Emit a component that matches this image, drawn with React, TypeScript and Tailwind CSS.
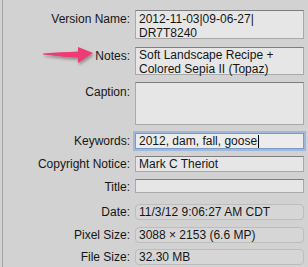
const field = 'border border-[#a9a9a9] border-t-[#7e7e7e] bg-[#e6e6e6] px-[3px] leading-[14px]';
const readonly = 'rounded-[4px] border border-[#bdbdbd] bg-[#d6d6d6] px-[3px] leading-[14px]';

function Row({ label, children, labelPad = 'pt-[2px]' }: { label: string; children: React.ReactNode; labelPad?: string }) {
  return (
    <>
      <div className={`text-right leading-[14px] ${labelPad}`}>{label}</div>
      {children}
    </>
  );
}

export default function App() {
  return (
    <div
      className="relative h-[267px] w-[308px] overflow-hidden bg-[#d2d2d2] text-[12px] text-[#161616]"
      style={{ fontFamily: '"Liberation Sans", Arial, sans-serif' }}
    >
      <div className="absolute left-[2px] top-0 h-full w-px bg-[#a4a4a4]" />
      <div className="grid grid-cols-[130px_169px] gap-x-[5px] pt-[10px]">
        <Row label="Version Name:" labelPad="pt-[2px]">
          <div className={`${field} h-[29px] pt-[1px]`}>
            2012-11-03|09-06-27|
            <br />
            DR7T8240
          </div>
        </Row>
        <div className="col-span-2 h-[8px]" />
        <Row label="Notes:" labelPad="pt-[2px]">
          <div className={`${field} h-[28px] pt-[0px]`}>
            Soft Landscape Recipe +
            <br />
            Colored Sepia II (Topaz)
          </div>
        </Row>
        <div className="col-span-2 h-[7px]" />
        <Row label="Caption:" labelPad="pt-[3px]">
          <div className={`${field} h-[43px]`} />
        </Row>
        <div className="col-span-2 h-[8px]" />
        <Row label="Keywords:" labelPad="pt-[1px]">
          <div className="flex h-[16px] items-center border border-[#7b9ac4] bg-[#ececec] px-[3px] leading-[14px] shadow-[0_0_0_2px_#9fb9dc]">
            2012, dam, fall, goose
            <span className="ml-px inline-block h-[13px] w-px bg-black" />
          </div>
        </Row>
        <div className="col-span-2 h-[7px]" />
        <Row label="Copyright Notice:" labelPad="pt-[1px]">
          <div className={`${field} h-[16px]`}>Mark C Theriot</div>
        </Row>
        <div className="col-span-2 h-[7px]" />
        <Row label="Title:" labelPad="pt-[1px]">
          <div className={`${field} h-[14px]`} />
        </Row>
        <div className="col-span-2 h-[10px]" />
        <Row label="Date:" labelPad="pt-[1px]">
          <div className={`${readonly} h-[16px]`}>11/3/12 9:06:27 AM CDT</div>
        </Row>
        <div className="col-span-2 h-[7px]" />
        <Row label="Pixel Size:" labelPad="pt-[1px]">
          <div className={`${readonly} h-[16px]`}>3088 × 2153 (6.6 MP)</div>
        </Row>
        <div className="col-span-2 h-[6px]" />
        <Row label="File Size:" labelPad="pt-[1px]">
          <div className={`${readonly} h-[16px]`}>32.30 MB</div>
        </Row>
      </div>
      <svg className="absolute left-[38px] top-[42px]" width="60" height="26" viewBox="0 0 60 26">
        <defs>
          <filter id="sh" x="-20%" y="-40%" width="140%" height="180%">
            <feDropShadow dx="1" dy="2" stdDeviation="1.5" floodColor="#000" floodOpacity="0.35" />
          </filter>
        </defs>
        <path
          d="M5 11.5 C18 10.5 28 10 40 9.5 L40 5 L55 11 L40 21 L40 15.5 C28 15.5 18 14 5 12.5 Z"
          fill="#ec3a74"
          filter="url(#sh)"
        />
      </svg>
    </div>
  );
}
